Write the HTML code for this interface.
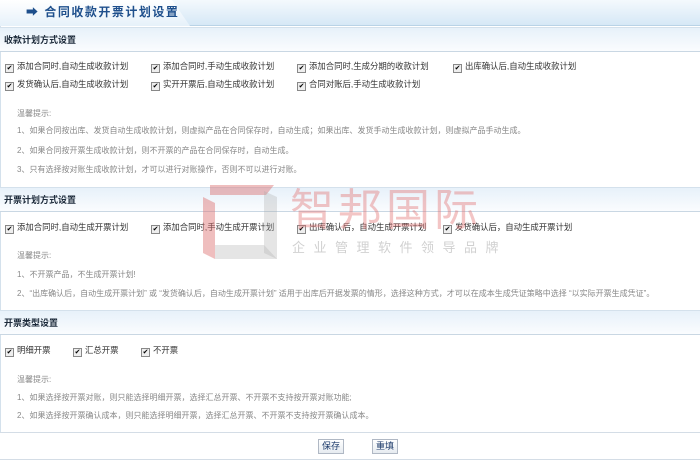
<!DOCTYPE html>
<html><head><meta charset="utf-8"><style>
*{margin:0;padding:0;box-sizing:border-box}
body{width:700px;height:461px;overflow:hidden;background:#fff;font-family:"Liberation Sans","Noto Sans CJK SC",sans-serif;font-size:8.4px;color:#333;position:relative}
.a{position:absolute;white-space:nowrap;line-height:12px}
.top{position:absolute;left:0;top:0;width:700px;height:26px;background:linear-gradient(#f4f9fd,#d6e8f6);border-bottom:1px solid #b9d3e6}
.tab{position:absolute;left:0;top:0;width:190px;height:26px;background:linear-gradient(#ffffff,#e6f1fa);clip-path:polygon(0 0,172px 0,190px 26px,0 26px)}
.sh{position:absolute;left:0;width:700px;height:25px;background:linear-gradient(#e7f1fa,#fafcfe);border-top:1px solid #d4e1ec;border-bottom:1px solid #c9d7e3;font-weight:bold;color:#1c2a3a;font-size:9px;line-height:24px;padding-left:4px}
.cb{display:inline-block;width:9px;height:9px;border:1px solid #888;background:#eee;vertical-align:-1px;margin-right:3px;position:relative;font-size:7px;line-height:7px;text-align:center;color:#000}
.t{color:#888;font-size:8px}
.btn{position:absolute;top:439px;width:26px;height:15px;border:1px solid #b0b8c4;background:linear-gradient(#fff,#e6ebf0);font-size:9px;text-align:center;line-height:13px;color:#1c3a6a}
</style></head><body>
<div class="top"></div><div class="tab"></div>
<div class="a" style="left:26px;top:6px;font-size:12px;font-weight:bold;color:#1e4f8c;letter-spacing:1.5px">➡ 合同收款开票计划设置</div>
<div style="position:absolute;left:0;top:26px;width:1px;height:406px;background:#d4e1ec"></div>

<div class="sh" style="top:27px">收款计划方式设置</div>
<div class="a" style="left:5px;top:60px"><span class="cb">✔</span>添加合同时,自动生成收款计划</div>
<div class="a" style="left:151px;top:60px"><span class="cb">✔</span>添加合同时,手动生成收款计划</div>
<div class="a" style="left:297px;top:60px"><span class="cb">✔</span>添加合同时,生成分期的收款计划</div>
<div class="a" style="left:453px;top:60px"><span class="cb">✔</span>出库确认后,自动生成收款计划</div>
<div class="a" style="left:5px;top:78px"><span class="cb">✔</span>发货确认后,自动生成收款计划</div>
<div class="a" style="left:151px;top:78px"><span class="cb">✔</span>实开开票后,自动生成收款计划</div>
<div class="a" style="left:297px;top:78px"><span class="cb">✔</span>合同对账后,手动生成收款计划</div>
<div class="a t" style="left:17px;top:108px">温馨提示:</div>
<div class="a t" style="left:17px;top:125px">1、如果合同按出库、发货自动生成收款计划，则虚拟产品在合同保存时，自动生成；如果出库、发货手动生成收款计划，则虚拟产品手动生成。</div>
<div class="a t" style="left:17px;top:145px">2、如果合同按开票生成收款计划，则不开票的产品在合同保存时，自动生成。</div>
<div class="a t" style="left:17px;top:164px">3、只有选择按对账生成收款计划，才可以进行对账操作，否则不可以进行对账。</div>

<div class="sh" style="top:187px">开票计划方式设置</div>
<div class="a" style="left:5px;top:221px"><span class="cb">✔</span>添加合同时,自动生成开票计划</div>
<div class="a" style="left:151px;top:221px"><span class="cb">✔</span>添加合同时,手动生成开票计划</div>
<div class="a" style="left:297px;top:221px"><span class="cb">✔</span>出库确认后，自动生成开票计划</div>
<div class="a" style="left:443px;top:221px"><span class="cb">✔</span>发货确认后，自动生成开票计划</div>
<div class="a t" style="left:17px;top:250px">温馨提示:</div>
<div class="a t" style="left:17px;top:269px">1、不开票产品，不生成开票计划!</div>
<div class="a t" style="left:17px;top:288px">2、“出库确认后，自动生成开票计划” 或 “发货确认后，自动生成开票计划” 适用于出库后开据发票的情形，选择这种方式，才可以在成本生成凭证策略中选择 “以实际开票生成凭证”。</div>

<div class="sh" style="top:310px">开票类型设置</div>
<div class="a" style="left:5px;top:344px"><span class="cb">✔</span>明细开票</div>
<div class="a" style="left:73px;top:344px"><span class="cb">✔</span>汇总开票</div>
<div class="a" style="left:141px;top:344px"><span class="cb">✔</span>不开票</div>
<div class="a t" style="left:17px;top:374px">温馨提示:</div>
<div class="a t" style="left:17px;top:392px">1、如果选择按开票对账，则只能选择明细开票，选择汇总开票、不开票不支持按开票对账功能;</div>
<div class="a t" style="left:17px;top:410px">2、如果选择按开票确认成本，则只能选择明细开票，选择汇总开票、不开票不支持按开票确认成本。</div>
<div style="position:absolute;left:0;top:432px;width:700px;height:1px;background:#d4dde6"></div>
<div class="btn" style="left:318px">保存</div>
<div class="btn" style="left:372px">重填</div>
<div style="position:absolute;left:0;top:459px;width:700px;height:1px;background:#d4dde6"></div>

<svg style="position:absolute;left:200px;top:183px" width="90" height="80">
<polygon points="10,2 74,2 66,12 10,12" fill="rgba(220,110,110,0.45)"/>
<polygon points="3,14 15,20 15,76 3,70" fill="rgba(220,110,110,0.45)"/>
<polygon points="64,8 77,14 77,76 64,70" fill="rgba(170,170,170,0.3)"/>
<polygon points="15,62 64,62 77,76 15,76" fill="rgba(170,170,170,0.3)"/>
</svg>
<div class="a" style="left:290px;top:181px;font-size:44px;color:rgba(225,110,110,0.4);font-family:'Noto Sans CJK SC',sans-serif;letter-spacing:4px;line-height:50px">智邦国际</div>
<div class="a" style="left:292px;top:240px;font-size:13px;color:rgba(150,150,150,0.45);letter-spacing:8.5px;line-height:16px">企业管理软件领导品牌</div>
</body></html>
